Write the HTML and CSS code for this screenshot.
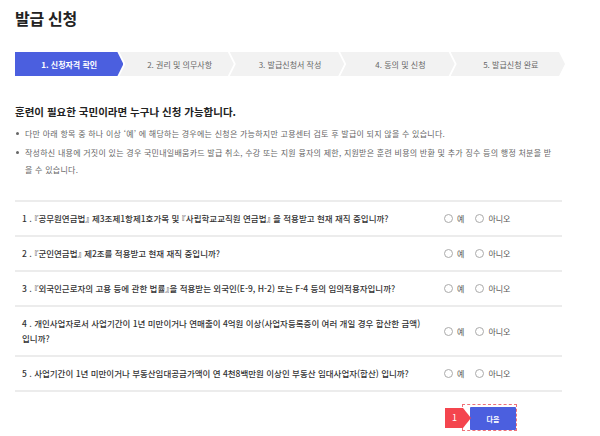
FILE: index.html
```html
<!DOCTYPE html>
<html lang="ko">
<head>
<meta charset="utf-8">
<link rel="stylesheet" href="styles.css">
</head>
<body>
<div class="page">
  <h1 class="title">발급 신청</h1>
  <ol class="steps">
    <li class="step active">1. 신청자격 확인</li>
    <li class="step">2. 권리 및 의무사항</li>
    <li class="step">3. 발급신청서 작성</li>
    <li class="step">4. 동의 및 신청</li>
    <li class="step last">5. 발급신청 완료</li>
  </ol>
  <h2 class="heading">훈련이 필요한 국민이라면 누구나 신청 가능합니다.</h2>
  <ul class="notes">
    <li>다만 아래 항목 중 하나 이상 ‘예’ 에 해당하는 경우에는 신청은 가능하지만 고용센터 검토 후 발급이 되지 않을 수 있습니다.</li>
    <li>작성하신 내용에 거짓이 있는 경우 국민내일배움카드 발급 취소, 수강 또는 지원 융자의 제한, 지원받은 훈련 비용의 반환 및 추가 징수 등의 행정 처분을 받을 수 있습니다.</li>
  </ul>
  <div class="questions">
    <div class="row">
      <div class="q">1 . 『공무원연금법』 제3조제1항제1호가목 및 『사립학교교직원 연금법』 을 적용받고 현재 재직 중입니까?</div>
      <div class="opts"><span class="radio"></span><span class="lbl">예</span><span class="radio"></span><span class="lbl">아니오</span></div>
    </div>
    <div class="row">
      <div class="q">2 . 『군인연금법』 제2조를 적용받고 현재 재직 중입니까?</div>
      <div class="opts"><span class="radio"></span><span class="lbl">예</span><span class="radio"></span><span class="lbl">아니오</span></div>
    </div>
    <div class="row">
      <div class="q">3 . 『외국인근로자의 고용 등에 관한 법률』을 적용받는 외국인(E-9, H-2) 또는 F-4 등의 임의적용자입니까?</div>
      <div class="opts"><span class="radio"></span><span class="lbl">예</span><span class="radio"></span><span class="lbl">아니오</span></div>
    </div>
    <div class="row">
      <div class="q">4 . 개인사업자로서 사업기간이 1년 미만이거나 연매출이 4억원 이상(사업자등록증이 여러 개일 경우 합산한 금액) 입니까?</div>
      <div class="opts"><span class="radio"></span><span class="lbl">예</span><span class="radio"></span><span class="lbl">아니오</span></div>
    </div>
    <div class="row">
      <div class="q">5 . 사업기간이 1년 미만이거나 부동산임대공급가액이 연 4천8백만원 이상인 부동산 임대사업자(합산) 입니까?</div>
      <div class="opts"><span class="radio"></span><span class="lbl">예</span><span class="radio"></span><span class="lbl">아니오</span></div>
    </div>
  </div>
  <div class="footer">
    <div class="btn-wrap">
      <span class="badge">1</span>
      <button class="next">다음</button>
    </div>
  </div>
</div>
</body>
</html>
```

FILE: styles.css
```css
* { box-sizing: border-box; }
html, body { margin: 0; padding: 0; background: #fff; }
body {
  font-family: "Noto Sans CJK KR", "Noto Sans", sans-serif;
  color: #222;
}
.page { padding: 8px 38px 0 15px; width: 600px; }
.title {
  margin: 0;
  font-size: 16px;
  line-height: 20px;
  font-weight: 700;
  color: #222;
  letter-spacing: -0.3px;
}
.steps {
  list-style: none;
  margin: 24px 0 0;
  padding: 0;
  display: flex;
  height: 24px;
  width: 545px;
}
.step {
  flex: 1 1 0;
  height: 24px;
  background: #f2f2f2;
  color: #666;
  font-size: 8px;
  display: flex;
  align-items: center;
  justify-content: center;
  margin-right: -5px;
  clip-path: polygon(0 0, calc(100% - 6px) 0, 100% 50%, calc(100% - 6px) 100%, 0 100%, 6px 50%);
  padding-left: 6px;
}
.step + .step { margin-left: 1px; }
.step.active {
  background: #4b5fdf;
  color: #fff;
  font-weight: 700;
  clip-path: polygon(0 0, calc(100% - 6px) 0, 100% 50%, calc(100% - 6px) 100%, 0 100%);
  padding-left: 0;
}
.heading {
  margin: 28px 0 0;
  font-size: 10.5px;
  line-height: 16px;
  font-weight: 700;
  color: #222;
}
.notes {
  list-style: none;
  margin: 5px 0 0;
  padding: 0;
  font-size: 8px;
  letter-spacing: 0.25px;
  color: #666;
  line-height: 17px;
  width: 540px;
  word-break: break-all;
}
.notes li { position: relative; padding-left: 10px; margin-bottom: 2px; }
.notes li::before {
  content: "";
  position: absolute;
  left: 1px;
  top: 7px;
  width: 3px;
  height: 3px;
  border-radius: 50%;
  background: #666;
}
.questions {
  margin-top: 22px;
  border-top: 2px solid #ececec;
  width: 547px;
}
.row {
  display: flex;
  align-items: center;
  border-bottom: 2px solid #ececec;
  padding: 9px 0 9px 7px;
}
.q {
  flex: 1 1 auto;
  padding-right: 6px;
  font-size: 8.5px;
  line-height: 15px;
  color: #333;
  font-weight: 500;
  word-break: keep-all;
  font-feature-settings: "halt" 1;
}
.opts {
  flex: 0 0 118px;
  display: flex;
  align-items: center;
  font-size: 8px;
  color: #555;
}
.radio {
  width: 9px;
  height: 9px;
  border: 1px solid #aaa;
  border-radius: 50%;
  margin-right: 4px;
  background: #fff;
}
.lbl { margin-right: 11px; }
.footer {
  display: flex;
  padding: 12px 0 0 447px;
}
.btn-wrap {
  position: relative;
  padding: 3px 1px 1px 8px;
  outline: 1px dashed #f07078;
  outline-offset: -1px;
}
.next {
  display: block;
  width: 46px;
  height: 23px;
  border: none;
  background: #4b5fdf;
  color: #fff;
  font-family: inherit;
  font-size: 7px;
  font-weight: 700;
  padding: 0;
  border-radius: 1px;
}
.badge {
  position: absolute;
  left: -17px;
  top: 4px;
  width: 26px;
  height: 20px;
  background: #f4454e;
  color: #fff;
  font-size: 9px;
  line-height: 20px;
  padding-left: 7px;
  clip-path: polygon(0 0, 18px 0, 26px 50%, 18px 100%, 0 100%);
}
```
